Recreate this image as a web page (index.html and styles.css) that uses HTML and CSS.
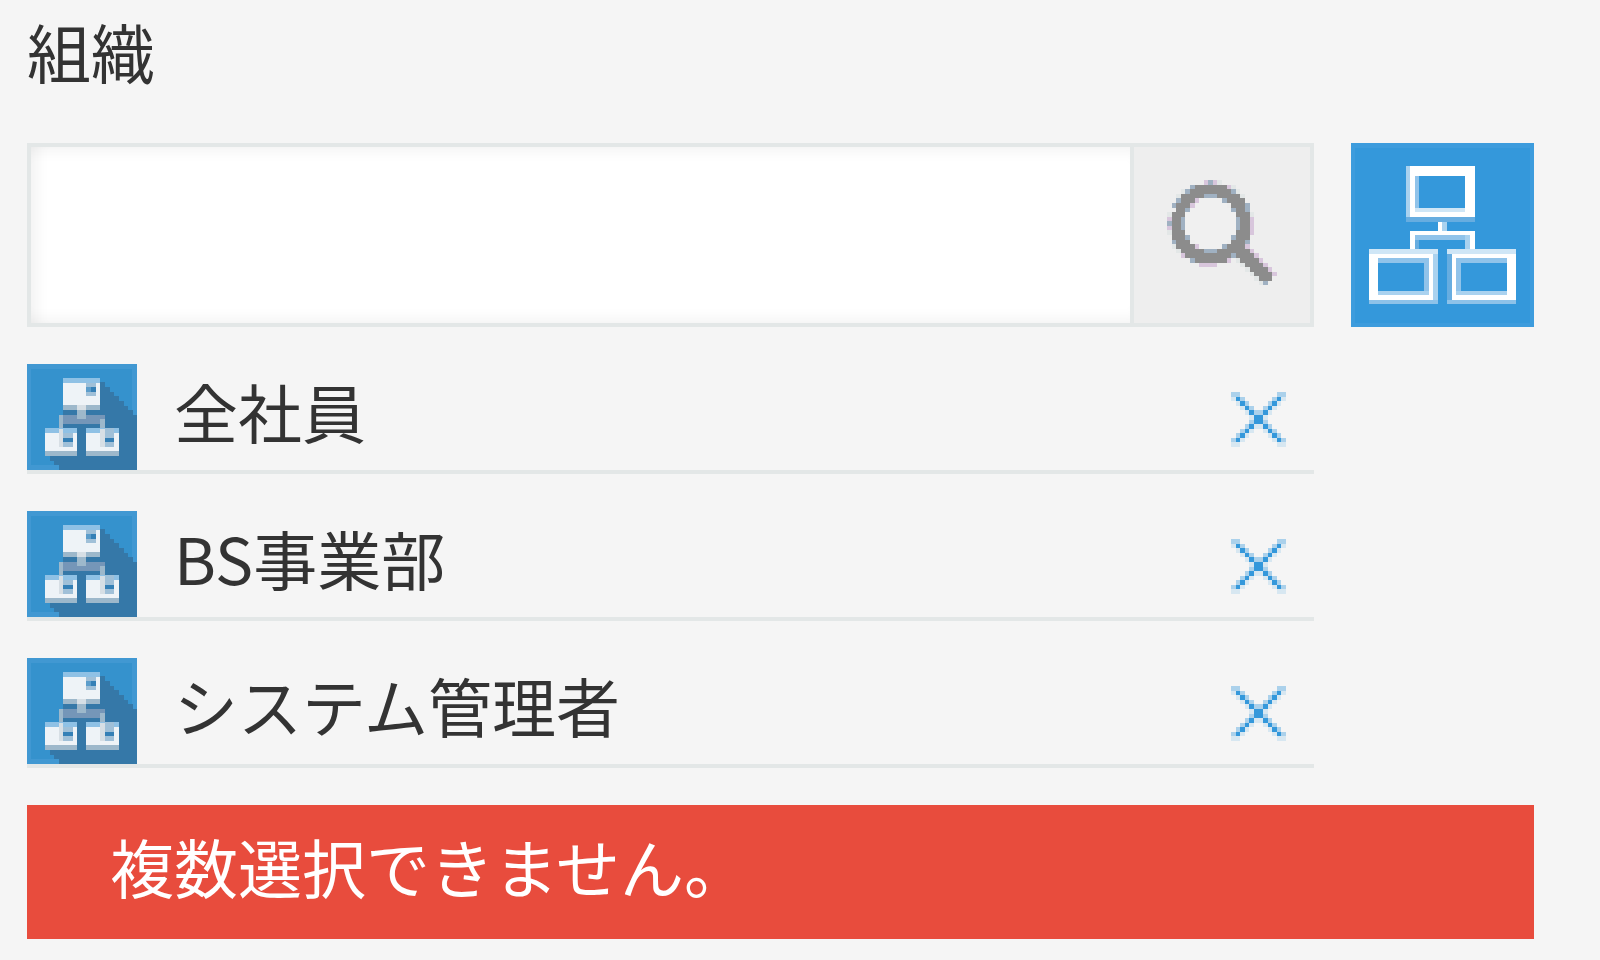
FILE: index.html
```
<!DOCTYPE html>
<html lang="ja">
<head>
    <meta charset="UTF-8">
    <title>組織</title>
    <link rel="stylesheet" href="styles.css">
</head>
<body>
    <!--アイコン定義-->
    <svg class="defs" aria-hidden="true">
        <symbol id="icon-search" viewBox="0 0 24 24">
            <path fill="#f0f0f0" d="M7 4h5v1h1v1h1v1h1v5h-1v1h-1v1h-1v1H7v-1H6v-1H5v-1H4V7h1V6h1V5h1z"/>
            <path fill="#d8c6dc" d="M8 0h3v1H8zM13 1h1v1h-1zM6 4h1v1H6zM5 5h1v1H5zM0 8h1v3H0zM18 8h1v4h-1zM6 14h1v1H6zM3 16h1v1H3zM7 18h4v1H7zM13 17h1v1h-1zM17 14h1v1h-1zM18 15h1v1h-1zM19 16h1v1h-1zM20 17h1v1h-1zM21 18h1v1h-1zM22 19h1v1h-1zM23 20h1v1h-1z"/>
            <path fill="#e3e7e7" d="M7 1h1v1H7zM11 0h1v1h-1zM14 1h1v1h-1zM3 2h1v1H3zM15 2h1v1h-1zM2 3h1v1H2zM16 3h1v1h-1zM0 7h1v1H0zM18 7h1v1h-1zM0 11h1v1H0zM1 14h1v1H1zM2 15h1v1H2zM15 17h1v1h-1zM16 18h1v1h-1zM17 19h1v1h-1zM18 20h1v1h-1zM19 21h1v1h-1zM20 22h1v1h-1z"/>
            <path fill="#8c8c8c" d="M6 1h7v1H6zM5 2h9v1H5zM3 3h13v1H3zM3 4h3v1H3zM13 4h4v1h-4zM2 5h3v1H2zM14 5h3v1h-3zM2 6h2v1H2zM15 6h2v1h-2zM1 7h3v6H1zM15 7h3v6h-3zM2 13h3v1H2zM14 13h3v1h-3zM2 14h4v1H2zM13 14h4v1h-4zM3 15h15v1H3zM4 16h15v1H4zM6 17h7v1H6zM16 17h4v1h-4zM17 18h4v1h-4zM18 19h4v1h-4zM19 20h4v1h-4zM20 21h3v1h-3z"/>
            <path fill="#a0b1c2" d="M5 1h1v1H5zM9 0h1v1H9zM4 2h1v1H4zM14 2h1v1h-1zM2 4h1v1H2zM17 5h1v2h-1zM1 5h1v1H1zM8 3h3v1H8zM12 4h1v1h-1zM4 6h1v1H4zM14 6h1v1h-1zM0 9h1v1H0zM3 8h1v3H3zM15 8h1v3h-1zM4 12h1v1H4zM14 12h1v1h-1zM12 14h1v1h-1zM8 15h3v1H8zM14 16h1v1h-1zM1 13h1v1H1zM17 13h1v1h-1zM5 17h1v1H5zM21 22h1v1h-1z"/>
        </symbol>
        <symbol id="icon-close" viewBox="0 0 12 12">
            <path fill="#d7e7f1" d="M0 1h1v1H0zM1 2h1v1H1zM2 3h1v1H2zM3 4h1v1H3zM4 5h1v1H4zM11 1h1v1h-1zM10 2h1v1h-1zM9 3h1v1H9zM8 4h1v1H8zM7 5h1v1H7zM5 7h2v1H5zM4 8h1v1H4zM7 8h1v1H7zM3 9h1v1H3zM8 9h1v1H8zM2 10h1v1H2zM9 10h1v1H9zM0 11h2v1H0zM10 11h2v1h-2z"/>
            <path fill="#abd1eb" d="M0 0h2v1H0zM10 0h2v1h-2zM2 1h1v1H2zM9 1h1v1H9zM3 2h1v1H3zM8 2h1v1H8zM4 3h1v1H4zM7 3h1v1H7zM5 4h2v1H5zM4 6h1v1H4zM7 6h1v1H7zM3 7h1v1H3zM8 7h1v1H8zM2 8h1v1H2zM9 8h1v1H9zM1 9h1v1H1zM10 9h1v1h-1zM0 10h1v1H0zM11 10h1v1h-1z"/>
            <path fill="#3498db" d="M1 1h1v1H1zM10 1h1v1h-1zM2 2h1v1H2zM9 2h1v1H9zM3 3h1v1H3zM8 3h1v1H8zM4 4h1v1H4zM7 4h1v1H7zM5 5h2v2H5zM4 7h1v1H4zM7 7h1v1H7zM3 8h1v1H3zM8 8h1v1H8zM2 9h1v1H2zM9 9h1v1H9zM1 10h1v1H1zM10 10h1v1h-1z"/>
        </symbol>
        <symbol id="icon-tree" viewBox="0 0 549 552">
            <path fill="#3d9cdd" d="M0 0h549v552H0z"/>
            <path fill="#3498db" d="M12 15h525v525H12z"/>
            <path fill="#fff" d="M177 69h195v153H177zM261 222h12v42h-12zM177 264h195v12H177zM177 276h15v42h-15zM357 276h15v42h-15zM54 333h192v138H54zM303 333h192v138H303z"/>
            <path fill="#3498db" d="M204 99h138v96H204zM81 360h138v84H81zM330 360h138v84H330z"/>
            <path fill="#90c3ea" d="M192 99h12v96h-12zM192 276h165v15H192zM81 345h153v15H81zM219 360h15v84h-15zM315 345h153v15H315zM315 360h15v84h-15z"/>
            <path fill="#cfe6f6" d="M192 195h150v12H192zM54 318h207v15H54zM288 318h207v15H288z"/>
            <path fill="#aad2ef" d="M165 69h12v153h-12zM273 222h15v42h-15zM342 276h15v42h-15zM81 444h153v12H81zM315 444h153v12H315zM246 333h15v138h-15z"/>
            <path fill="#67ade0" d="M165 222h207v15H165zM192 291h12v27h-12zM288 333h15v150h-15z"/>
            <path fill="#8dc2e9" d="M54 471h207v12H54zM288 471h207v12H288z"/>
        </symbol>
        <symbol id="icon-group" viewBox="0 0 330 318">
            <path fill="#4198d2" d="M0 0h330v318H0z"/>
            <path fill="#3592cd" d="M12 14h303v290H12z"/>
            <path fill="#3578a8" d="M219 55h15v14h14v14h14v14h14v14h14v14h14v14h14v14h12v165H96v-14H82v-14H68v-14H54V138h165z"/>
            <path fill="#3592cd" d="M54 138h54v54H54z"/>
            <path fill="#7596b8" d="M96 153h138v27H96z"/>
            <path fill="#9db8cb" d="M96 153h12v54H96zM219 165h15v42h-15zM108 123h111v15H108zM150 137h27v28h-27zM54 261h96v15H54zM177 261h99v15h-99z"/>
            <path fill="#8fc1e5" d="M108 42h111v15H108zM54 192h96v15H54zM177 192h99v15h-99z"/>
            <path fill="#eef3f7" d="M108 57h111v66H108zM54 207h96v54H54zM177 207h99v54h-99z"/>
            <path fill="#a0c0d8" d="M177 57h30v39h-30zM108 207h30v42h-30zM234 192h27v57h-27z"/>
            <path fill="#d7dfe5" d="M96 195h12v54H96zM219 195h15v54h-15zM150 123h27v14h-27z"/>
            <path fill="#3580b6" d="M191 69h16v15h-16zM108 222h30v12h-30zM234 222h27v12h-27z"/>
            <path fill="#5c9dcb" d="M177 69h14v15h-14z"/>
        </symbol>
    </svg>

    <div class="picker">
        <label class="title" for="keyword">組織</label>
        <div class="search">
            <input type="text" id="keyword">
            <button type="button" class="search-btn" aria-label="検索"><svg><use href="#icon-search"/></svg></button>
        </div>
        <button type="button" class="tree-btn" aria-label="組織選択"><svg><use href="#icon-tree"/></svg></button>
        <ul class="list">
            <li>
                <svg class="group"><use href="#icon-group"/></svg>
                <span>全社員</span>
                <button type="button" class="close" aria-label="全社員を削除"><svg><use href="#icon-close"/></svg></button>
            </li>
            <li>
                <svg class="group"><use href="#icon-group"/></svg>
                <span>BS事業部</span>
                <button type="button" class="close" aria-label="BS事業部を削除"><svg><use href="#icon-close"/></svg></button>
            </li>
            <li>
                <svg class="group"><use href="#icon-group"/></svg>
                <span>システム管理者</span>
                <button type="button" class="close" aria-label="システム管理者を削除"><svg><use href="#icon-close"/></svg></button>
            </li>
        </ul>
        <p class="error" role="alert">複数選択できません。</p>
    </div>
</body>
</html>
```
FILE: styles.css
```
*{
    margin: 0;
    padding: 0;
    box-sizing: border-box;
}
body{
    background: #f5f5f5;
    color: #333;
    font: 64px/92px "Noto Sans CJK JP", sans-serif;
}
button{
    border: 0;
    background: none;
    cursor: pointer;
}
svg{
    display: block;
    shape-rendering: crispEdges;
}
.defs{
    position: absolute;
    width: 0;
    height: 0;
}
.picker{
    display: grid;
    grid-template-columns: 1fr 183px;
    column-gap: 37px;
    row-gap: 37px;
    padding: 4px 66px 20px 27px;
}
.title{
    grid-column: 1 / 3;
    padding-bottom: 10px;
}
.search{
    display: flex;
    height: 184px;
    border: 4px solid #e3e7e7;
}
.search input{
    flex: 1;
    min-width: 0;
    padding: 0 27px;
    border: 0;
    outline: 0;
    background: #fff;
    color: #333;
    font: inherit;
    /*右側には影を付けない*/
    box-shadow: inset 0 14px 14px -10px rgba(0,0,0,.05), inset 0 -14px 14px -10px rgba(0,0,0,.05), inset 16px 0 14px -10px rgba(0,0,0,.05);
}
.search-btn{
    display: flex;
    align-items: center;
    justify-content: center;
    width: 180px;
    border-left: 4px solid #e3e7e7;
    background: #eee;
}
.search-btn svg{
    width: 110px;
    height: 110px;
}
.tree-btn svg{
    width: 183px;
    height: 184px;
}
.list{
    display: grid;
    row-gap: 37px;
    list-style: none;
}
.list li{
    display: flex;
    align-items: center;
    height: 110px;
    padding-right: 28px;
    border-bottom: 4px solid #e3e7e7;
}
.list span{
    flex: 1;
    margin-left: 37px;
    padding-bottom: 14px;
}
.group{
    width: 110px;
    height: 106px;
}
.close{
    padding-top: 4px;
}
.close svg{
    width: 55px;
    height: 55px;
}
.error{
    grid-column: 1 / 3;
    padding: 14px 83px 28px;
    background: #e84c3d;
    color: #fff;
}
```
